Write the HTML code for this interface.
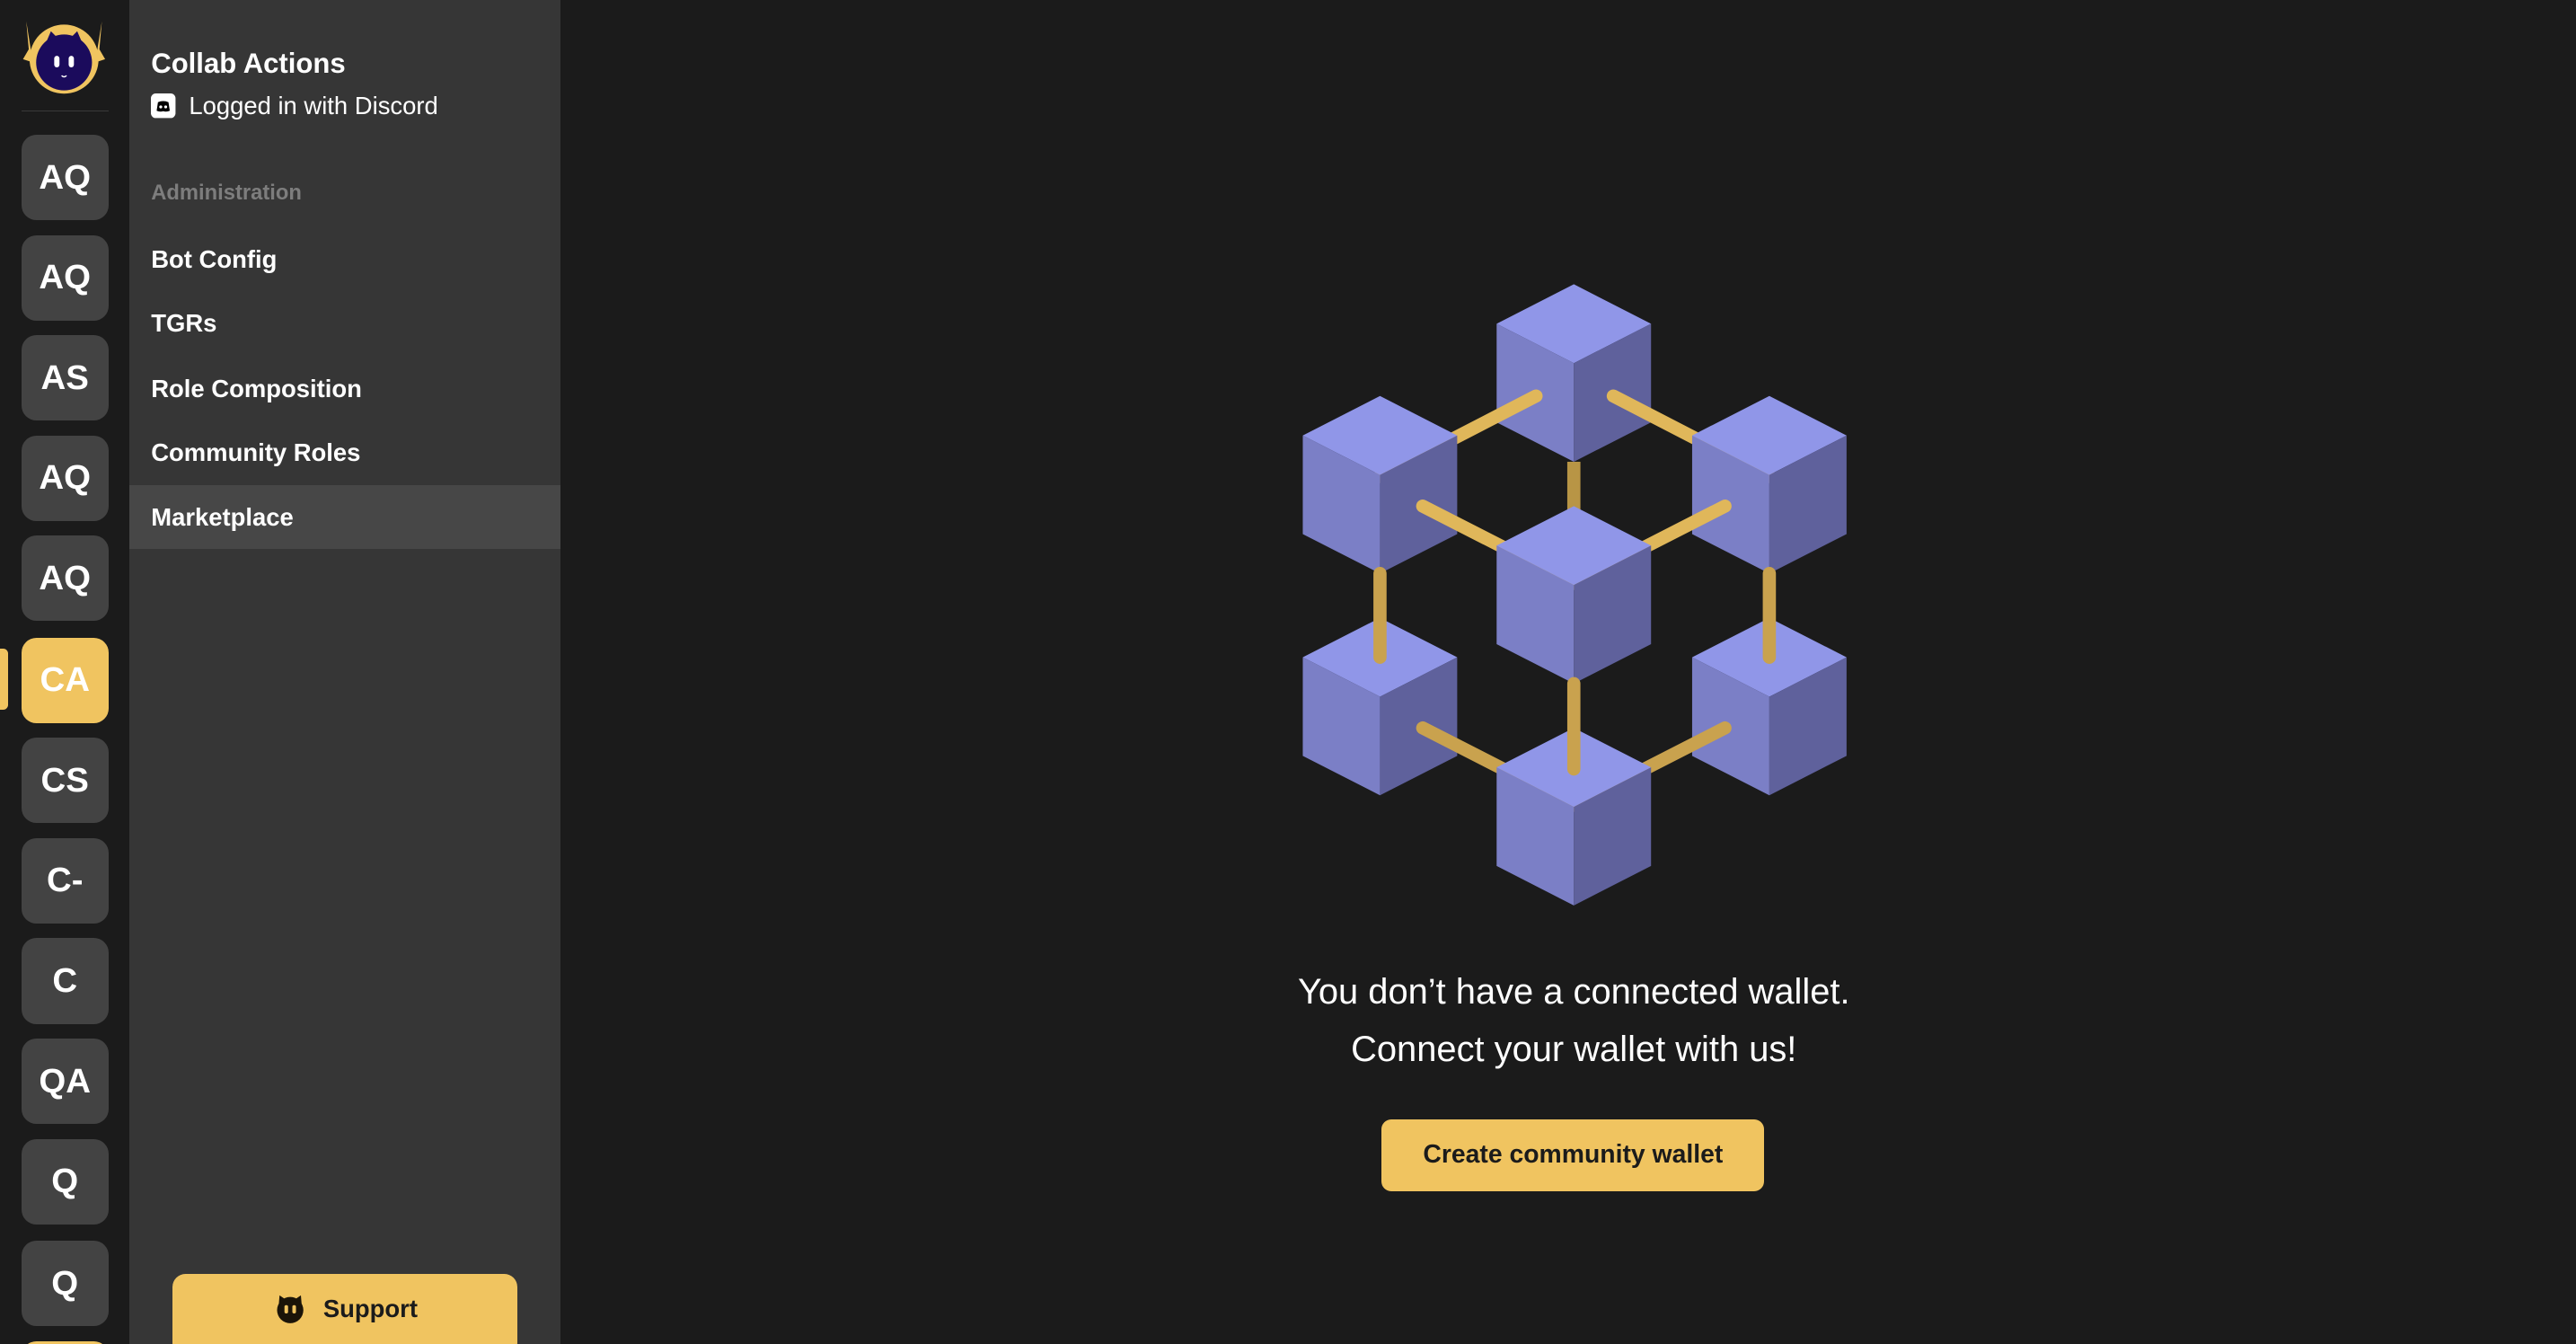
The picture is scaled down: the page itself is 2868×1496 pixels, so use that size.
<!DOCTYPE html>
<html><head><meta charset="utf-8"><style>
html,body{margin:0;padding:0;background:#1b1b1b;overflow:hidden;width:2868px;height:1496px}
#w{zoom:1.82908;position:relative;width:1568px;height:818px;overflow:hidden;font-family:"Liberation Sans",Arial,sans-serif;color:#fff}
.rail{position:absolute;left:0;top:0;width:79px;height:818px;background:#1b1b1b}
.tile{position:absolute;left:13px;width:53px;height:52px;border-radius:9px;background:#434343;color:#fff;font-weight:bold;font-size:21px;display:flex;align-items:center;justify-content:center}
.side{position:absolute;left:79px;top:0;width:262px;height:818px;background:#363636;overflow:hidden}
.item{position:absolute;left:13px;font-weight:bold;font-size:15px}
</style></head><body><div id="w">
<div class="rail">
<svg style="position:absolute;left:0;top:0" width="79" height="60" viewBox="0 0 79 60">
<path d="M16 13 L17.5 30 L14 36 L20 38Z M62 13 L60.5 30 L64 36 L58 38Z" fill="#f0c460"/>
<circle cx="39" cy="36" r="21" fill="#f0c460"/>
<circle cx="39" cy="38" r="17" fill="#1b0b5c"/>
<path d="M28 26 L31 19 L35 23Z M50 26 L47 19 L43 23Z" fill="#1b0b5c"/>
<rect x="33" y="34" width="3.2" height="7" rx="1.6" fill="#fff"/><rect x="41.8" y="34" width="3.2" height="7" rx="1.6" fill="#fff"/>
<path d="M37.5 46 q1.5 1.5 3 0" stroke="#fff" stroke-width="0.8" fill="none"/>
</svg>
<div style="position:absolute;left:13px;top:67px;width:53px;height:1px;background:#3a3a3a"></div>
<div class="tile" style="top:82px">AQ</div>
<div class="tile" style="top:143px">AQ</div>
<div class="tile" style="top:204px">AS</div>
<div class="tile" style="top:265px">AQ</div>
<div class="tile" style="top:326px">AQ</div>
<div style="position:absolute;left:0;top:395px;width:5px;height:37px;background:#f0c460;border-radius:0 3px 3px 0"></div>
<div class="tile" style="top:388px;background:#f0c460">CA</div>
<div class="tile" style="top:449px">CS</div>
<div class="tile" style="top:510px">C-</div>
<div class="tile" style="top:571px">C</div>
<div class="tile" style="top:632px">QA</div>
<div class="tile" style="top:693px">Q</div>
<div class="tile" style="top:755px">Q</div>
<div class="tile" style="top:816px;background:#f0c460"></div>
</div>
<div class="side">
<div style="position:absolute;left:13px;top:29px;font-size:17px;font-weight:bold">Collab Actions</div>
<svg style="position:absolute;left:13px;top:57px" width="15" height="15" viewBox="0 0 15 15"><rect width="15" height="15" rx="3" fill="#fff"/><path d="M3.5 10.5 L4.3 5.3 Q7.5 4 10.7 5.3 L11.5 10.5 Q9.5 11.5 7.5 10.8 Q5.5 11.5 3.5 10.5Z" fill="#000"/><circle cx="6" cy="8.2" r="0.9" fill="#fff"/><circle cx="9" cy="8.2" r="0.9" fill="#fff"/></svg>
<div style="position:absolute;left:36px;top:56px;font-size:15px">Logged in with Discord</div>
<div style="position:absolute;left:13px;top:110px;font-size:13px;font-weight:bold;color:#7d7d7d">Administration</div>
<div class="item" style="top:149px">Bot Config</div>
<div class="item" style="top:188px">TGRs</div>
<div class="item" style="top:228px">Role Composition</div>
<div class="item" style="top:267px">Community Roles</div>
<div style="position:absolute;left:0;top:295px;width:262px;height:39px;background:#474747"></div>
<div class="item" style="top:306px">Marketplace</div>
<div style="position:absolute;left:26px;top:775px;width:210px;height:50px;border-radius:8px;background:#f0c460;color:#1b1b1b;font-weight:bold;font-size:15px;display:flex;align-items:center;justify-content:center;padding-bottom:7px;box-sizing:border-box">
<svg width="22" height="18" viewBox="0 0 22 18" style="margin-right:9px"><circle cx="11" cy="10" r="8" fill="#1b1408"/><path d="M4 7 L4.5 1 L9 4Z M18 7 L17.5 1 L13 4Z" fill="#1b1408"/><rect x="7.5" y="7" width="2.2" height="5" rx="1" fill="#f0c460"/><rect x="12.3" y="7" width="2.2" height="5" rx="1" fill="#f0c460"/></svg>Support</div>
</div>
<svg style="position:absolute;left:0;top:0" width="1568" height="818" viewBox="0 0 1568 818">
<defs>
<g id="c" stroke="none"><path d="M0 0 L47 24 L0 48 L-47 24Z" fill="#9096e8"/><path d="M-47 24 L0 48 L0 108 L-47 84Z" fill="#7b7fc6"/><path d="M47 24 L0 48 L0 108 L47 84Z" fill="#5f619c"/></g>
</defs>
<use href="#c" x="958" y="173"/>
<g stroke="#e0b75a" stroke-width="8" stroke-linecap="round" fill="none">
<line x1="935" y1="241" x2="840" y2="290"/><line x1="982" y1="241" x2="1077" y2="290"/>
</g>
<use href="#c" x="840" y="241"/><use href="#c" x="1077" y="241"/>
<g stroke="#e0b75a" stroke-width="8" stroke-linecap="round" fill="none">
<line x1="866" y1="308" x2="958" y2="355"/><line x1="1050" y1="308" x2="958" y2="355"/>
<line x1="958" y1="281" x2="958" y2="330" stroke-linecap="butt" stroke="#b89545"/>
</g>
<use href="#c" x="958" y="308"/>
<use href="#c" x="840" y="376"/><use href="#c" x="1077" y="376"/>
<g stroke="#c9a24e" stroke-width="8" stroke-linecap="round" fill="none">
<line x1="840" y1="349" x2="840" y2="400"/><line x1="1077" y1="349" x2="1077" y2="400"/>
<line x1="866" y1="443" x2="958" y2="490"/><line x1="1050" y1="443" x2="958" y2="490"/>
</g>
<use href="#c" x="958" y="443"/>
<line x1="958" y1="416" x2="958" y2="468" stroke="#c9a24e" stroke-width="8" stroke-linecap="round"/>
</svg>
<div style="position:absolute;left:608px;width:700px;top:586px;text-align:center;font-size:21.8px;line-height:35px">You don’t have a connected wallet.<br>Connect your wallet with us!</div>
<div style="position:absolute;left:841px;top:681px;width:233px;height:44px;border-radius:6px;background:#f0c460;color:#1b1b1b;font-weight:bold;font-size:15.5px;display:flex;align-items:center;justify-content:center">Create community wallet</div>
</div></body></html>
